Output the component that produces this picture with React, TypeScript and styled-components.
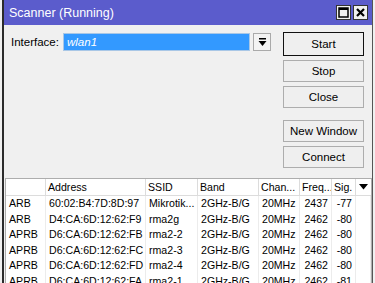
import styled, { createGlobalStyle } from "styled-components";

const GlobalStyle = createGlobalStyle`
  html, body {
    margin: 0;
    padding: 0;
    background: #f0f0f0;
  }
  body {
    font-family: "Liberation Sans", Arial, sans-serif;
    font-size: 11px;
    color: #000;
  }
`;

const rows = [
  { type: "ARB", address: "60:02:B4:7D:8D:97", ssid: "Mikrotik...", band: "2GHz-B/G", chan: "20MHz", freq: "2437", sig: "-77" },
  { type: "ARB", address: "D4:CA:6D:12:62:F9", ssid: "rma2g", band: "2GHz-B/G", chan: "20MHz", freq: "2462", sig: "-80" },
  { type: "APRB", address: "D6:CA:6D:12:62:FB", ssid: "rma2-2", band: "2GHz-B/G", chan: "20MHz", freq: "2462", sig: "-80" },
  { type: "APRB", address: "D6:CA:6D:12:62:FC", ssid: "rma2-3", band: "2GHz-B/G", chan: "20MHz", freq: "2462", sig: "-80" },
  { type: "APRB", address: "D6:CA:6D:12:62:FD", ssid: "rma2-4", band: "2GHz-B/G", chan: "20MHz", freq: "2462", sig: "-80" },
  { type: "APRB", address: "D6:CA:6D:12:62:FA", ssid: "rma2-1", band: "2GHz-B/G", chan: "20MHz", freq: "2462", sig: "-81" },
];

const columns = "40px 100px 52px 61px 41px 32px 24px 1fr";

const App = () => (
  <>
    <GlobalStyle />
    <Window>
      <TitleBar>
        <Title>Scanner (Running)</Title>
        <TitleButtons>
          <TitleButton>
            <svg width="11" height="11" viewBox="0 0 11 11">
              <rect x="1" y="1" width="9" height="9" fill="none" stroke="#000" strokeWidth="1.5" />
              <line x1="1" y1="2" x2="10" y2="2" stroke="#000" strokeWidth="2" />
            </svg>
          </TitleButton>
          <TitleButton>
            <svg width="11" height="11" viewBox="0 0 11 11">
              <path d="M2 2 L9 9 M9 2 L2 9" stroke="#000" strokeWidth="2.2" />
            </svg>
          </TitleButton>
        </TitleButtons>
      </TitleBar>
      <Body>
        <Top>
          <FormRow>
            <Label>Interface:</Label>
            <Select>wlan1</Select>
            <DropButton>
              <svg width="9" height="9" viewBox="0 0 9 9">
                <rect x="1" y="0" width="7" height="1.5" fill="#000" />
                <path d="M0.5 3 L8.5 3 L4.5 8 Z" fill="#000" />
              </svg>
            </DropButton>
          </FormRow>
          <Buttons>
            <Button $default>Start</Button>
            <Button>Stop</Button>
            <Button>Close</Button>
            <Spacer />
            <Button>New Window</Button>
            <Button>Connect</Button>
          </Buttons>
        </Top>
        <Table>
          <HeaderRow>
            <HeadCell />
            <HeadCell>Address</HeadCell>
            <HeadCell>SSID</HeadCell>
            <HeadCell>Band</HeadCell>
            <HeadCell>Chan...</HeadCell>
            <HeadCell>Freq...</HeadCell>
            <HeadCell>Sig.</HeadCell>
            <HeadMenu>
              <svg width="9" height="6" viewBox="0 0 9 6">
                <path d="M0 0 L9 0 L4.5 5.5 Z" fill="#000" />
              </svg>
            </HeadMenu>
          </HeaderRow>
          {rows.map((r) => (
            <Row key={r.address}>
              <Cell>{r.type}</Cell>
              <Cell>{r.address}</Cell>
              <Cell>{r.ssid}</Cell>
              <Cell>{r.band}</Cell>
              <Cell>{r.chan}</Cell>
              <Cell $right>{r.freq}</Cell>
              <Cell $right>{r.sig}</Cell>
              <Cell />
            </Row>
          ))}
        </Table>
      </Body>
    </Window>
  </>
);

export default App;

const Window = styled.div`
  width: 371px;
  height: 283px;
  margin-left: 2px;
  border-left: 2px solid #2b2b2b;
  border-right: 1px solid #555;
  background: #f0f0f0;
  overflow: hidden;
  box-sizing: border-box;
`;

const TitleBar = styled.div`
  height: 25px;
  background: #5b5ccc;
  display: flex;
  align-items: center;
  justify-content: space-between;
  padding: 0 4px 0 5px;
`;

const Title = styled.span`
  color: #fff;
  font-size: 12.5px;
`;

const TitleButtons = styled.div`
  display: flex;
  gap: 2px;
`;

const TitleButton = styled.div`
  width: 13px;
  height: 13px;
  background: #f0f0f0;
  border: 1px solid #333;
  display: flex;
  align-items: center;
  justify-content: center;
`;

const Body = styled.div`
  padding-top: 7px;
`;

const Top = styled.div`
  display: flex;
  justify-content: space-between;
  height: 146px;
  padding-left: 2px;
`;

const FormRow = styled.div`
  display: flex;
  align-items: center;
  height: 18px;
  margin-top: 1px;
  margin-left: 5px;
`;

const Label = styled.span`
  width: 52px;
  font-size: 11.5px;
`;

const Select = styled.div`
  width: 182px;
  height: 16px;
  line-height: 16px;
  background: #3399ff;
  border: 1px solid #a9c7e6;
  color: #fff;
  font-style: italic;
  font-size: 11.5px;
  padding-left: 3px;
`;

const DropButton = styled.div`
  width: 16px;
  height: 16px;
  margin-left: 3px;
  border: 1px solid #aaa;
  background: #f3f3f3;
  display: flex;
  align-items: center;
  justify-content: center;
`;

const Buttons = styled.div`
  display: flex;
  flex-direction: column;
  gap: 4px;
  width: 81px;
  margin-right: 8px;
  font-size: 11.5px;
`;

const Button = styled.div<{ $default?: boolean }>`
  height: ${(p) => (p.$default ? "22px" : "20px")};
  border: ${(p) => (p.$default ? "1px solid #111" : "1px solid #adadad")};
  background: #efefef;
  box-sizing: content-box;
  display: flex;
  align-items: center;
  justify-content: center;
`;

const Spacer = styled.div`
  height: 4px;
`;

const Table = styled.div`
  margin-left: 1px;
  background: #fff;
  border: 1px solid #adadad;
  font-size: 10.6px;
`;

const HeaderRow = styled.div`
  display: grid;
  grid-template-columns: ${columns};
  height: 16px;
  border-bottom: 1px solid #dcdcdc;
`;

const HeadCell = styled.div`
  padding-left: 2px;
  line-height: 16px;
  border-right: 1px solid #dcdcdc;
  white-space: nowrap;
  overflow: hidden;
`;

const HeadMenu = styled.div`
  display: flex;
  align-items: center;
  justify-content: center;
`;

const Row = styled.div`
  display: grid;
  grid-template-columns: ${columns};
  height: 15.6px;
`;

const Cell = styled.div<{ $right?: boolean }>`
  padding: 0 3px;
  line-height: 15.6px;
  text-align: ${(p) => (p.$right ? "right" : "left")};
  border-right: 1px solid #ececec;
  white-space: nowrap;
  overflow: hidden;
`;
